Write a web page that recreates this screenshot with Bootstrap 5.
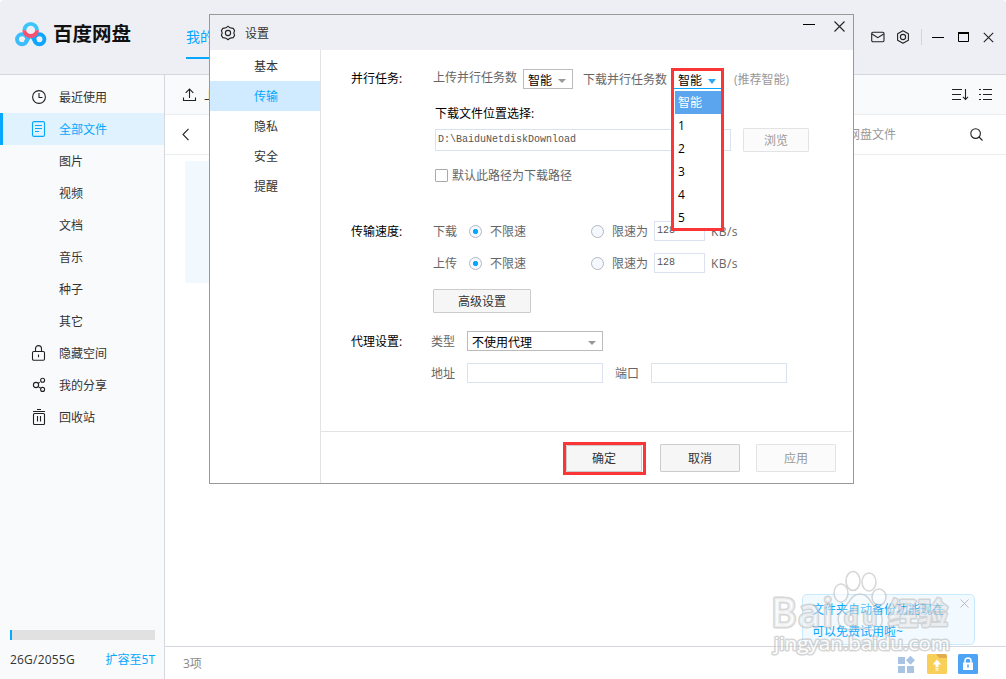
<!DOCTYPE html>
<html lang="zh-CN">
<head>
    <meta charset="UTF-8">
    <meta name="viewport" content="width=device-width, initial-scale=1.0">
    <title>百度网盘</title>
    <link rel="stylesheet" href="https://cdn.jsdelivr.net/npm/bootstrap@5.3.0/dist/css/bootstrap.min.css">
    <style>
        body {
            font-family: "Open Sans", "Noto Sans CJK SC", sans-serif;
            font-size: 12px;
            line-height: 20px;
            color: #333;
            background: #fff;
        }
        svg {
            display: block;
            flex: none;
            fill: none;
            stroke: #222;
            stroke-width: 1.1;
        }
        .app-window {
            width: 1006px;
            height: 679px;
        }
        .app-header {
            height: 75px;
            background: #eeeff5;
            border-bottom: 1px solid #d6d7de;
            border-radius: 4px 4px 0 0;
            padding: 0 12px 0 15px;
        }
        .brand-name {
            font-size: 19.5px;
            font-weight: 700;
            line-height: 30px;
            color: #111;
            margin: 19px 0 0 5px;
        }
        .main-tab {
            color: #06a7ff;
            font-size: 14px;
            height: 37px;
            line-height: 30px;
            margin: 22px 0 0 55px;
            border-bottom: 2px solid #06a7ff;
        }
        .win-tools { height: 74px; }
        .win-tools .sep {
            width: 1px;
            height: 16px;
            background: #d4d5dc;
        }

        /* left column */
        .side {
            width: 165px;
            background: #f9fafc;
            border-right: 1px solid #d6d7de;
            padding-top: 6px;
        }
        .side-item {
            height: 32px;
            padding: 2px 0 0 31px;
        }
        .side-item .icon-box {
            width: 28px;
            padding-bottom: 2px;
        }
        .side-item.current {
            background: #dff2fd;
            color: #06a7ff;
            border-left: 3px solid #06a7ff;
            padding-left: 28px;
        }
        .side-item.current svg { stroke: #06a7ff; }
        .quota { padding: 0 9px 9px 10px; }
        .quota .progress {
            height: 10px;
            border-radius: 0;
            background: #e1e1e1;
            margin-bottom: 10px;
        }
        .quota .progress-bar { background: #06a7ff; }
        .quota span { letter-spacing: .2px; }

        /* file area */
        .tool-row {
            height: 40px;
            background: #f9fafc;
            border-bottom: 1px solid #ebecee;
            padding: 0 13px 0 17px;
        }
        .path-row {
            height: 40px;
            border-bottom: 1px solid #ebecee;
            padding: 0 23px 0 16px;
        }
        .search-hint {
            color: #999;
            margin-right: 74px;
        }
        .file-tile {
            width: 100px;
            height: 122px;
            background: #f1f8fe;
            border-radius: 3px;
            margin: 6px 0 0 20px;
        }
        .status-row {
            height: 33px;
            border-top: 1px solid #d6d7de;
            color: #888;
            padding: 2px 28px 0 18px;
        }

        /* settings dialog */
        .settings {
            position: absolute;
            left: 209px;
            top: 14px;
            width: 645px;
            height: 470px;
            border: 1px solid #999;
            background: #fff;
        }
        .settings-title {
            height: 35px;
            background: #eeeff5;
            padding: 0 8px 0 10px;
        }
        .settings-nav {
            width: 111px;
            border-right: 1px solid #e3e3e3;
            padding-top: 1px;
        }
        .settings-nav div {
            height: 30px;
            line-height: 32px;
            padding-left: 2px;
            text-align: center;
        }
        .settings-nav .current {
            background: #d0ebff;
            color: #06a7ff;
        }
        .pane {
            padding: 19px 0 0 30px;
            color: #666;
        }
        .field-row { height: 20px; }
        .field-title {
            width: 82px;
            color: #000;
        }
        .speed-row span, .speed-row .field-title { padding-top: 2px; }
        .proxy-row span, .proxy-row .field-title { padding-top: 1px; }
        .box-input {
            height: 20px;
            border: 1px solid #d9e2ee;
            border-radius: 0;
            background: #fff;
            padding: 0 2px 2px;
            font: 10px/16px "Liberation Mono", monospace;
            color: #555;
        }
        .box-select {
            height: 20px;
            border: 1px solid #bbb;
            color: #000;
            padding: 3px 6px 0 4px;
            line-height: 18px;
        }
        .caret {
            width: 0;
            height: 0;
            border: 4px solid transparent;
            border-top: 4px solid #999;
            border-bottom: 0;
        }
        .btn-flat {
            font-size: 12px;
            line-height: 20px;
            padding: 2px 0 0;
            border: 1px solid #ccc;
            border-radius: 1px;
            background: #f6f6f6;
            color: #333;
        }
        .btn-flat:disabled {
            opacity: 1;
            border-color: #e3e3e3;
            background: #fbfbfb;
            color: #999;
        }
        .tick {
            width: 13px;
            height: 13px;
            border: 1px solid #aaa;
            border-radius: 1px;
            margin-right: 4px;
        }
        .dot {
            width: 13px;
            height: 13px;
            border: 1px solid #b4b8c0;
            border-radius: 50%;
            background: #f5f9ff;
        }
        .dot.on {
            background: radial-gradient(circle, #06a7ff 2.2px, #f5f9ff 3px);
        }
        .speed-row .w-kind { width: 36px; }
        .speed-row .w-free { width: 101px; margin-left: 8px; }
        .open-select {
            position: relative;
            width: 53px;
            height: 20px;
            margin-left: 4px;
        }
        .open-list {
            position: absolute;
            z-index: 2;
            left: 0;
            top: -1px;
            width: 53px;
            height: 163px;
            border: 3px solid #fb3636;
            background: #fff;
            color: #000;
        }
        .open-head {
            height: 18px;
            border-bottom: 1px solid #06a7ff;
            padding: 3px 5px 0 4px;
            margin-bottom: 2px;
        }
        .open-head .caret { border-top-color: #2ba8f5; border-top-width: 5px; }
        .open-list .opt {
            height: 23px;
            line-height: 24px;
            margin-left: 1px;
            padding-left: 3px;
        }
        .open-list .picked {
            background: #5ba4ee;
            color: #fff;
        }
        .settings-foot {
            height: 52px;
            border-top: 1px solid #e3e3e3;
            margin-right: 1px;
            padding: 10px 16px 0 0;
        }
        .settings-foot .btn { width: 80px; height: 28px; }
        .ok-frame {
            width: 83px;
            height: 33px;
            border: 3px solid #fb3636;
            margin: 0 14px 0 0;
        }
        .ok-frame .btn { width: 76px; height: 27px; display: block; padding-top: 1px; }

        /* promo bubble and watermark */
        .tip {
            position: absolute;
            left: 802px;
            top: 594px;
            width: 173px;
            height: 51px;
            background: #f2faff;
            border: 1px solid #c8eafd;
            border-radius: 5px;
            padding: 4px 0 0 9px;
            line-height: 22px;
            color: #06a7ff;
        }
        .tip::after {
            content: "";
            position: absolute;
            left: 131px;
            top: 46px;
            width: 7px;
            height: 7px;
            background: #f2faff;
            border: solid #c8eafd;
            border-width: 0 1px 1px 0;
            transform: rotate(45deg);
        }
        .tip svg {
            position: absolute;
            right: 5px;
            top: 4px;
            stroke: #bbb;
            stroke-width: 1;
        }
        .watermark {
            position: absolute;
            left: 766px;
            top: 566px;
            opacity: .62;
            pointer-events: none;
        }
        .watermark text {
            fill: #fff;
            stroke: #bdbdbd;
            stroke-width: 3;
            stroke-linejoin: round;
            paint-order: stroke;
            font-family: "Open Sans", "Noto Sans CJK SC", sans-serif;
        }
        .watermark .paw {
            fill: #fff;
            stroke: #bdbdbd;
            stroke-width: 1.5;
        }
    </style>
</head>
<body>
    <div class="app-window position-relative overflow-hidden d-flex flex-column">
        <header class="app-header d-flex align-items-start">
            <svg width="33" height="28" viewBox="0 0 33 28" style="margin-top: 20px">
                <g stroke-width="3.9">
                    <path d="M14.500 16.500L10.600 22.200" stroke="#2fb6fb"/>
                    <path d="M16.900 16.500L20.800 22.200" stroke="#1cabfb"/>
                    <circle cx="7" cy="19.300" r="5" stroke="#3bbdfb"/>
                    <circle cx="24.400" cy="19.300" r="5" stroke="#10a6fd"/>
                    <path d="M9.300 10.500a6.400 6.600 0 1 1 12.800 0" stroke="#3cc6f8"/>
                    <path d="M9.300 10.200a6.400 5.800 0 0 0 12.800 0" stroke="#f9506f"/>
                </g>
            </svg>
            <div class="brand-name">百度网盘</div>
            <div class="main-tab">我的网盘</div>
            <div class="win-tools d-flex align-items-center ms-auto">
                <svg width="14" height="12" viewBox="0 0 14 12"><rect x=".7" y="1.200" width="12.300" height="9.600" rx="1.200"/><path d="M1 3l5.800 3.600L12.700 3"/></svg>
                <svg style="margin-left: 11px" width="14" height="14" viewBox="0 0 14 14"><path d="M7 .8l5.400 3v6.400L7 13.200l-5.400-3V3.800z" stroke-linejoin="round"/><circle cx="7" cy="7" r="2.600"/></svg>
                <div class="sep" style="margin: 0 10px 0 11px"></div>
                <svg width="12" height="12" viewBox="0 0 12 12"><path d="M0 6.500h12" stroke="#000" stroke-width="1"/></svg>
                <svg style="margin-left: 14px" width="12" height="10" viewBox="0 0 12 10"><path d="M.5 1v8.500h10V1" stroke="#000" stroke-width="1"/><path d="M0 1h11" stroke="#000" stroke-width="2"/></svg>
                <svg style="margin-left: 13px" width="11" height="11" viewBox="0 0 11 11"><path d="M.8 .8l9.400 9.400M10.200 .8L.8 10.200"/></svg>
            </div>
        </header>

        <div class="d-flex flex-grow-1">
            <aside class="side d-flex flex-column flex-shrink-0">
                <div class="side-item d-flex align-items-center">
                    <div class="icon-box"><svg width="16" height="16" viewBox="0 0 16 16"><circle cx="8" cy="8" r="6.400"/><path d="M8 4v4.500h3.500"/></svg></div>最近使用
                </div>
                <div class="side-item current d-flex align-items-center">
                    <div class="icon-box"><svg width="16" height="16" viewBox="0 0 16 16"><rect x="1.500" y=".6" width="12" height="14.800" rx="1.500"/><path d="M4 4.500h7M4 7.500h7M4 10.500h4" stroke-width="1"/></svg></div>全部文件
                </div>
                <div class="side-item d-flex align-items-center"><div class="icon-box"></div>图片</div>
                <div class="side-item d-flex align-items-center"><div class="icon-box"></div>视频</div>
                <div class="side-item d-flex align-items-center"><div class="icon-box"></div>文档</div>
                <div class="side-item d-flex align-items-center"><div class="icon-box"></div>音乐</div>
                <div class="side-item d-flex align-items-center"><div class="icon-box"></div>种子</div>
                <div class="side-item d-flex align-items-center"><div class="icon-box"></div>其它</div>
                <div class="side-item d-flex align-items-center">
                    <div class="icon-box"><svg width="16" height="16" viewBox="0 0 16 16"><rect x="1.500" y="6.500" width="12" height="8.800" rx="1.200"/><path d="M4.500 6.500V3.600a3 3 0 0 1 6 0v2.900M7.500 9.500v2.800"/></svg></div>隐藏空间
                </div>
                <div class="side-item d-flex align-items-center">
                    <div class="icon-box"><svg width="16" height="16" viewBox="0 0 16 16"><circle cx="5" cy="8" r="2.600"/><circle cx="11.600" cy="3.200" r="2"/><circle cx="11.600" cy="12.400" r="2"/><path d="M7.200 6.400l1.500-1.100M7.200 9.600l2.500 1.600"/></svg></div>我的分享
                </div>
                <div class="side-item d-flex align-items-center">
                    <div class="icon-box"><svg width="16" height="16" viewBox="0 0 16 16"><path d="M2 2.500h12M6 .5h4M6.500 7v5.500M9.500 7v5.500"/><rect x="2.500" y="4.500" width="11" height="11" rx="1"/></svg></div>回收站
                </div>
                <div class="quota mt-auto">
                    <div class="progress"><div class="progress-bar" style="width: 1.3%"></div></div>
                    <div class="d-flex justify-content-between">
                        <span>26G/2055G</span>
                        <a class="text-decoration-none" style="color: #06a7ff">扩容至5T</a>
                    </div>
                </div>
            </aside>

            <main class="flex-grow-1 d-flex flex-column">
                <div class="tool-row d-flex align-items-center">
                    <svg width="15" height="14" viewBox="0 0 15 14"><path d="M1.500 9.500v3h12v-3M7.500 10V1.200M3.700 4.800l3.800-3.800 3.800 3.800"/></svg>
                    <span style="margin: 2px 0 0 7px">上传</span>
                    <svg class="ms-auto" width="17" height="13" viewBox="0 0 17 13"><path d="M0 1.500h10M0 6.500h9M0 11.500h9M13.500 1v10.500M11 8.800l2.500 2.700L16 8.800"/></svg>
                    <svg style="margin-left: 10px" width="14" height="13" viewBox="0 0 14 13"><path d="M0 1.500h2M4 1.500h9M0 6.500h2M4 6.500h9M0 11.500h2M4 11.500h9"/></svg>
                </div>
                <div class="path-row d-flex align-items-center">
                    <svg width="9" height="13" viewBox="0 0 9 13"><path d="M7.500 .8L2 6.500l5.500 5.700"/></svg>
                    <span class="search-hint ms-auto">搜索我的网盘文件</span>
                    <svg width="13" height="13" viewBox="0 0 13 13"><circle cx="5.600" cy="5.600" r="4.800"/><path d="M9 9l3.500 3.500"/></svg>
                </div>
                <div class="file-tile"></div>
                <div class="status-row d-flex align-items-center mt-auto">
                    <span>3项</span>
                    <svg class="ms-auto" width="18" height="18" viewBox="0 0 18 18" style="stroke: none; fill: #a9c3e3"><rect x="1" y="2" width="7" height="7"/><rect x="1" y="11" width="7" height="7"/><rect x="10" y="11" width="7" height="7"/><path d="M13.500 .8l4.400 4.500-4.400 4.500L9 5.300z"/></svg>
                    <svg style="margin-left: 12px; stroke: none" width="20" height="20" viewBox="0 0 20 20"><rect width="20" height="20" rx="1.500" fill="#f8d057"/><path d="M9 0h9.500L20 1.500V4h-8z" fill="#e3ad4f"/><path d="M10 5.500l4.200 5H11.500v2.500h-3v-2.500H5.800zM8.500 13.800h3v1h-3zM8.500 15.500h3v1h-3z" fill="#fff"/></svg>
                    <svg style="margin-left: 11px; stroke: none" width="20" height="20" viewBox="0 0 20 20"><rect width="20" height="20" rx="1.500" fill="#4da3f5"/><rect x="5" y="8.500" width="10" height="7.500" fill="#fff"/><path d="M7 9V7a3 3 0 0 1 6 0v2" stroke="#fff" stroke-width="1.500"/><path d="M10 10.500v3" stroke="#4da3f5" stroke-width="1.500"/></svg>
                </div>
            </main>
        </div>

        <!-- settings dialog -->
        <section class="settings d-flex flex-column">
            <div class="settings-title d-flex align-items-center">
                <svg width="16" height="16" viewBox="0 0 16 16"><path d="M8 1.200Q9.300 3.200 13.200 3.400L14.600 5.600Q13 8 14.600 10.400L13.200 12.600Q9.300 12.800 8 14.800Q6.700 12.800 2.800 12.600L1.400 10.400Q3 8 1.400 5.600L2.800 3.400Q6.700 3.200 8 1.200z" stroke-linejoin="round"/><circle cx="8" cy="8" r="2.600"/></svg>
                <span style="margin: 3px 0 0 9px">设置</span>
                <div class="d-flex align-items-center ms-auto align-self-start" style="padding-top: 5px">
                    <svg width="12" height="12" viewBox="0 0 12 12"><path d="M0 4.500h12" stroke="#000" stroke-width="1"/></svg>
                    <svg style="margin-left: 19px" width="11" height="11" viewBox="0 0 11 11"><path d="M.5 .5l10 10M10.500 .5l-10 10"/></svg>
                </div>
            </div>
            <div class="d-flex flex-grow-1">
                <nav class="settings-nav flex-shrink-0">
                    <div>基本</div>
                    <div class="current">传输</div>
                    <div>隐私</div>
                    <div>安全</div>
                    <div>提醒</div>
                </nav>
                <div class="flex-grow-1 d-flex flex-column">
                    <div class="pane flex-grow-1">
                        <div class="field-row d-flex">
                            <div class="field-title">并行任务:</div>
                            <span style="margin: -1px 6px 0 0">上传并行任务数</span>
                            <div class="box-select d-flex justify-content-between align-items-center" style="width: 50px">智能<i class="caret"></i></div>
                            <span style="margin: 1px 0 0 10px">下载并行任务数</span>
                            <div class="open-select">
                                <div class="open-list">
                                    <div class="open-head d-flex justify-content-between align-items-center">智能<i class="caret"></i></div>
                                    <div class="opt picked">智能</div>
                                    <div class="opt">1</div>
                                    <div class="opt">2</div>
                                    <div class="opt">3</div>
                                    <div class="opt">4</div>
                                    <div class="opt">5</div>
                                </div>
                            </div>
                            <span style="margin: 1px 0 0 10px; color: #999">(推荐智能)</span>
                        </div>
                        <div class="field-row" style="margin: 15px 0 0 84px; color: #000">下载文件位置选择:</div>
                        <div class="d-flex align-items-center" style="margin: 4px 0 0 84px; height: 24px">
                            <input class="box-input" style="width: 296px; height: 22px" value="D:\BaiduNetdiskDownload">
                            <button class="btn btn-flat" style="width: 66px; height: 24px; margin-left: 12px" disabled>浏览</button>
                        </div>
                        <div class="d-flex align-items-center" style="margin: 13px 0 0 84px; height: 21px">
                            <div class="tick"></div>默认此路径为下载路径
                        </div>
                        <div class="field-row speed-row d-flex align-items-center" style="margin-top: 35px">
                            <div class="field-title">传输速度:</div>
                            <span class="w-kind">下载</span>
                            <div class="dot on"></div><span class="w-free">不限速</span>
                            <div class="dot"></div><span style="margin: 0 6px 0 8px">限速为</span>
                            <input class="box-input" style="width: 51px" value="128"><span style="margin-left: 6px; letter-spacing: .4px">KB/s</span>
                        </div>
                        <div class="field-row speed-row d-flex align-items-center" style="margin: 12px 0 0 82px">
                            <span class="w-kind">上传</span>
                            <div class="dot on"></div><span class="w-free">不限速</span>
                            <div class="dot"></div><span style="margin: 0 6px 0 8px">限速为</span>
                            <input class="box-input" style="width: 51px" value="128"><span style="margin-left: 6px; letter-spacing: .4px">KB/s</span>
                        </div>
                        <button class="btn btn-flat d-block" style="width: 98px; height: 24px; margin: 16px 0 0 82px">高级设置</button>
                        <div class="field-row proxy-row d-flex" style="margin-top: 18px">
                            <div class="field-title" style="width: 80px">代理设置:</div>
                            <span style="margin-right: 12px">类型</span>
                            <div class="box-select d-flex justify-content-between align-items-center" style="width: 136px">不使用代理<i class="caret"></i></div>
                        </div>
                        <div class="field-row proxy-row d-flex" style="margin: 12px 0 0 80px">
                            <span style="margin-right: 12px">地址</span>
                            <input class="box-input" style="width: 136px">
                            <span style="margin: 0 12px">端口</span>
                            <input class="box-input" style="width: 136px">
                        </div>
                    </div>
                    <div class="settings-foot d-flex justify-content-end">
                        <div class="ok-frame"><button class="btn btn-flat">确定</button></div>
                        <button class="btn btn-flat" style="margin: 2px 16px 0 0">取消</button>
                        <button class="btn btn-flat" style="margin-top: 2px" disabled>应用</button>
                    </div>
                </div>
            </div>
        </section>

        <div class="tip">
            文件夹自动备份功能现在<br>可以免费试用啦~
            <svg width="9" height="9" viewBox="0 0 9 9"><path d="M.5 .5l8 8M8.500 .5l-8 8"/></svg>
        </div>
        <svg class="watermark" width="200" height="100" viewBox="0 0 200 100">
            <g class="paw">
                <ellipse cx="75" cy="27" rx="7" ry="9"/>
                <ellipse cx="87" cy="15" rx="7" ry="9.500"/>
                <ellipse cx="103" cy="16" rx="7" ry="9"/>
                <ellipse cx="113" cy="31" rx="7" ry="8"/>
                <path fill-opacity=".5" d="M94 28c-9 0-10 9-17 15-7 6-7 20 5 21 6 0 7-2 12-2s7 2 13 2c12-1 11-15 4-21-7-6-8-15-17-15z"/>
            </g>
            <text x="5" y="61" font-size="39" font-weight="600" textLength="62" fill-opacity=".6">Bai</text>
            <text x="78" y="59" font-size="23" font-weight="600" textLength="33" fill-opacity=".6">du</text>
            <text x="122" y="58" font-size="30" font-weight="700" textLength="60" fill-opacity=".6">经验</text>
            <text x="8" y="84" font-size="19" textLength="176" lengthAdjust="spacingAndGlyphs">jingyan.baidu.com</text>
        </svg>
    </div>
    <script src="https://cdn.jsdelivr.net/npm/bootstrap@5.3.0/dist/js/bootstrap.bundle.min.js"></script>
</body>
</html>
